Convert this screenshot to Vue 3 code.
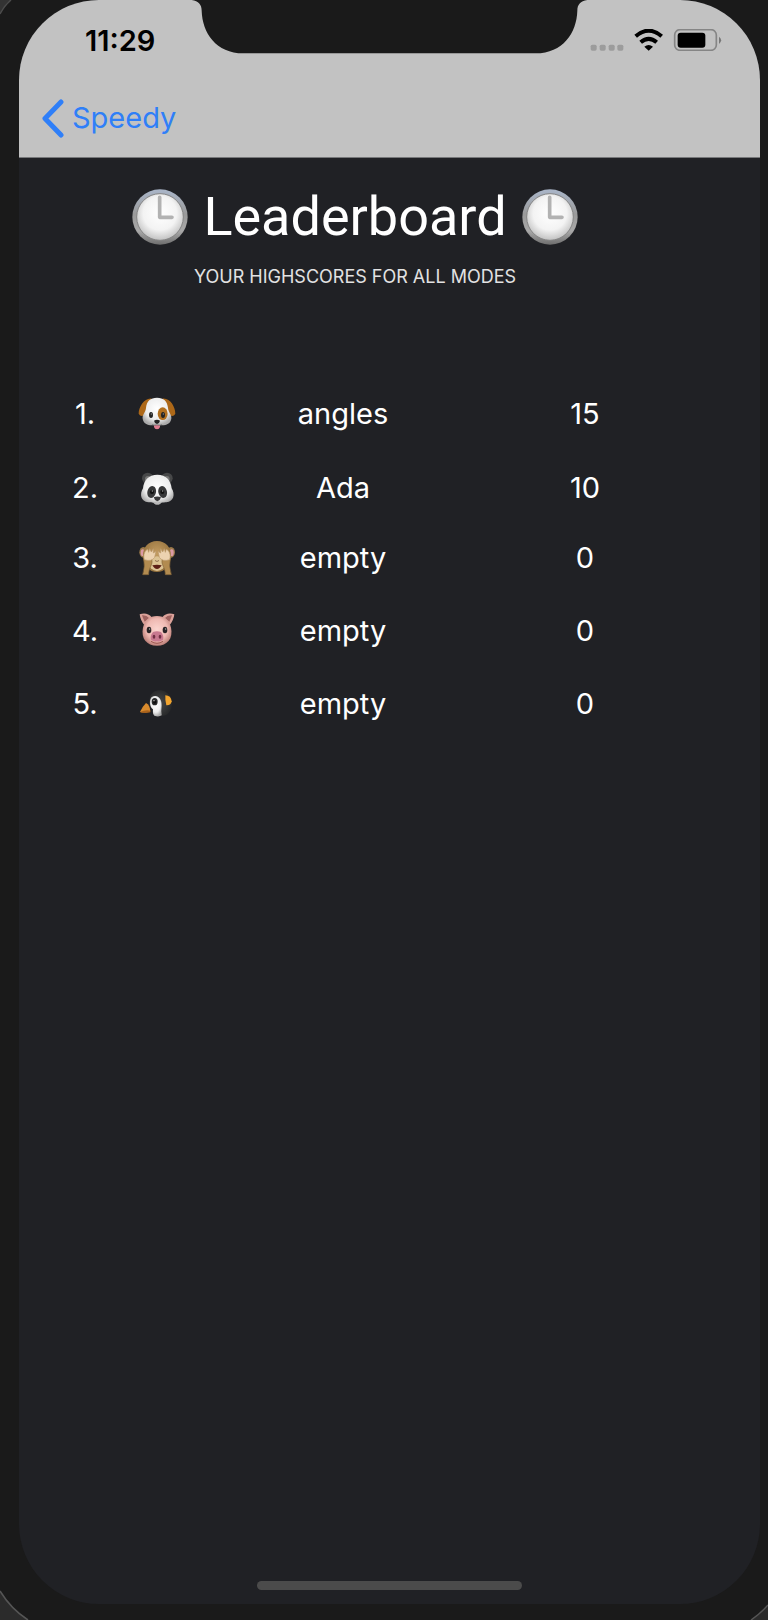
<script setup>
const entries = [
  { rank: 1, animal: 'dog', name: 'angles', score: 15 },
  { rank: 2, animal: 'panda', name: 'Ada', score: 10 },
  { rank: 3, animal: 'monkey', name: 'empty', score: 0 },
  { rank: 4, animal: 'pig', name: 'empty', score: 0 },
  { rank: 5, animal: 'penguin', name: 'empty', score: 0 },
]
</script>

<template>
  <div class="device">
    <svg class="corner corner-tl" viewBox="0 0 40 40" aria-hidden="true">
      <path d="M0 0H11Q4 6 0 14Z" fill="#333" />
      <path d="M11 0Q4 6 0 14" fill="none" stroke="#4c4c4c" stroke-width="1.5" />
    </svg>
    <svg class="corner corner-bl" viewBox="0 0 40 40" aria-hidden="true">
      <path d="M0 11Q11 29 28 40H0Z" fill="#2b2b2b" />
      <path d="M0 11Q11 29 28 40" fill="none" stroke="#555" stroke-width="1.5" />
    </svg>
    <svg class="corner corner-br" viewBox="0 0 40 40" aria-hidden="true">
      <path d="M40 25Q32 34 23 40H40Z" fill="#2b2b2b" />
      <path d="M40 25Q32 34 23 40" fill="none" stroke="#555" stroke-width="1.5" />
    </svg>

    <div class="screen">
      <header class="top">
        <div class="status">
          <time class="time">11:29</time>
          <svg class="notch" viewBox="0 0 1197 162" aria-hidden="true">
            <path fill="#1a1a1a" d="M5 0C26 3 35 14 35 32C37 98 78 160 160 160H1037C1119 160 1160 98 1162 32C1162 14 1171 3 1192 0Z" />
          </svg>
          <svg class="indicators" viewBox="0 0 396 66" role="img" aria-label="Signal, Wi-Fi, battery">
            <g fill="#9c9c9c">
              <rect x="2" y="47" width="18" height="18" rx="5" />
              <rect x="29" y="47" width="18" height="18" rx="5" />
              <rect x="56" y="47" width="18" height="18" rx="5" />
              <rect x="82" y="47" width="18" height="18" rx="5" />
            </g>
            <g fill="none" stroke="#000" stroke-width="12">
              <path d="M137 22Q176 -12 215 22" />
              <path d="M152 40Q176 19 200 40" />
            </g>
            <path d="M163 53Q176 43 189 53L176 65Z" />
            <rect x="254" y="2" width="125" height="62" rx="16" fill="none" stroke="#858585" stroke-width="5" />
            <rect x="263" y="11" width="83" height="45" rx="9" />
            <path d="M387 23Q400 34 387 45Z" fill="#777" />
          </svg>
        </div>
        <nav class="nav">
          <a class="back" href="#">
            <svg class="chevron" viewBox="0 0 24 40" aria-hidden="true">
              <path d="M20 4L4 20.5L20 37" fill="none" stroke="#2f7ff8" stroke-width="5" stroke-linecap="round" stroke-linejoin="round" />
            </svg>
            <span>Speedy</span>
          </a>
        </nav>
      </header>

      <main class="content">
        <svg class="defs" width="0" height="0" aria-hidden="true">
          <defs>
            <linearGradient id="rim" x1="0" y1="0" x2="0" y2="1">
              <stop offset="0" stop-color="#aab6c9" />
              <stop offset=".45" stop-color="#9a9a9a" />
              <stop offset=".75" stop-color="#a9a9a9" />
              <stop offset="1" stop-color="#6e6e6e" />
            </linearGradient>
            <radialGradient id="dial" cx=".5" cy=".42" r=".6">
              <stop offset="0" stop-color="#fff" />
              <stop offset=".6" stop-color="#f3f3f3" />
              <stop offset="1" stop-color="#bdbdbd" />
            </radialGradient>
            <radialGradient id="white" cx=".5" cy=".4" r=".6">
              <stop offset="0" stop-color="#fff" />
              <stop offset=".65" stop-color="#eee" />
              <stop offset="1" stop-color="#aaa" />
            </radialGradient>
            <radialGradient id="pink" cx=".5" cy=".45" r=".55">
              <stop offset="0" stop-color="#fbd5cf" />
              <stop offset=".65" stop-color="#efb9b2" />
              <stop offset="1" stop-color="#bd817a" />
            </radialGradient>
            <radialGradient id="fur" cx=".5" cy=".4" r=".6">
              <stop offset="0" stop-color="#c39c61" />
              <stop offset="1" stop-color="#93703c" />
            </radialGradient>
            <radialGradient id="coal" cx=".45" cy=".5" r=".6">
              <stop offset="0" stop-color="#494a4a" />
              <stop offset="1" stop-color="#242526" />
            </radialGradient>
          </defs>
        </svg>

        <div class="heading">
          <h1 class="title">
            <svg v-for="side in 2" :key="side" class="clock" :class="{ last: side === 2 }" viewBox="0 0 168 168" aria-hidden="true">
              <circle cx="84" cy="84" r="83" fill="url(#rim)" />
              <circle cx="84" cy="84" r="70" fill="url(#dial)" stroke="#858585" stroke-width="3" />
              <path d="M83 25V85H120" fill="none" stroke="#b2b2b2" stroke-width="11" stroke-linecap="round" stroke-linejoin="round" />
            </svg>
            <span class="title-text">Leaderboard</span>
          </h1>
          <p class="subtitle">YOUR HIGHSCORES FOR ALL MODES</p>
        </div>

        <table class="scores" aria-label="Highscores">
          <colgroup>
            <col class="col-rank" />
            <col class="col-animal" />
            <col class="col-name" />
            <col class="col-score" />
          </colgroup>
          <tbody>
            <tr v-for="entry in entries" :key="entry.rank">
              <td>{{ entry.rank }}.</td>
              <td>
                <svg class="animal" viewBox="0 0 120 120" role="img" :aria-label="entry.animal">
                  <g v-if="entry.animal === 'dog'">
                    <path d="M44 14C24 10 5 38 5 59Q10 69 22 64L42 30ZM76 14C98 10 115 38 115 59Q110 69 98 64L78 30Z" fill="#ad6818" />
                    <path d="M60 11C80 11 91 21 93 42C94 55 105 62 103 74C101 89 86 95 73 94H47C34 95 19 89 17 74C15 62 26 55 27 42C29 21 40 11 60 11Z" fill="url(#white)" />
                    <ellipse cx="77" cy="59" rx="15" ry="19" fill="#b2701f" />
                    <ellipse cx="42" cy="63" rx="6" ry="9" fill="#242424" />
                    <ellipse cx="78" cy="63" rx="6" ry="9" fill="#242424" />
                    <circle cx="43" cy="60" r="2" fill="#888" />
                    <circle cx="79" cy="60" r="2" fill="#888" />
                    <path d="M51 94H69V99Q67 106 60 106Q53 106 51 99Z" fill="#df7d91" />
                    <path d="M45 91Q56 97 60 89Q64 97 75 91" fill="none" stroke="#777" stroke-width="2" />
                    <path d="M51 80Q60 74 69 80Q67 89 60 90Q53 89 51 80Z" fill="#222" />
                  </g>
                  <g v-else-if="entry.animal === 'panda'">
                    <circle cx="32" cy="31" r="17" fill="#474849" />
                    <circle cx="90" cy="31" r="17" fill="#474849" />
                    <circle cx="33" cy="33" r="9" fill="#777" />
                    <circle cx="89" cy="33" r="9" fill="#777" />
                    <path d="M61 20C87 20 102 37 104 61C115 79 111 101 88 103C77 104 74 103 70 107Q61 114 52 107C48 103 45 104 34 103C11 101 7 79 18 61C20 37 35 20 61 20Z" fill="url(#white)" />
                    <ellipse cx="44" cy="72" rx="13" ry="18" fill="#373839" transform="rotate(15 44 72)" />
                    <ellipse cx="77" cy="72" rx="13" ry="18" fill="#373839" transform="rotate(-15 77 72)" />
                    <circle cx="45" cy="72" r="6" fill="#111" />
                    <circle cx="76" cy="72" r="6" fill="#111" />
                    <circle cx="46" cy="69" r="2" fill="#aaa" />
                    <circle cx="77" cy="69" r="2" fill="#aaa" />
                    <path d="M50 88Q61 83 72 88Q70 97 61 100Q52 97 50 88Z" fill="#39393a" />
                    <path d="M51 105Q61 97 71 105" fill="none" stroke="#aaa" stroke-width="2" />
                  </g>
                  <g v-else-if="entry.animal === 'monkey'">
                    <ellipse cx="19" cy="43" rx="12" ry="16" fill="#9b7a4a" />
                    <ellipse cx="102" cy="43" rx="12" ry="16" fill="#9b7a4a" />
                    <ellipse cx="17" cy="44" rx="6" ry="10" fill="#dc9aa6" />
                    <ellipse cx="104" cy="44" rx="6" ry="10" fill="#dc9aa6" />
                    <path d="M60 9C86 9 103 28 102 55C101 85 83 102 60 102C37 102 19 85 18 55C17 28 34 9 60 9Z" fill="url(#fur)" />
                    <ellipse cx="60" cy="77" rx="24" ry="22" fill="#dcc394" />
                    <path d="M56 67L58 71M64 67L62 71" stroke="#6c4931" stroke-width="3" />
                    <path d="M46 82Q60 79 74 82Q68 93 60 93Q52 93 46 82Z" fill="#5d2018" />
                    <path d="M20 61L44 64C49 80 35 87 35 110H17Q25 86 20 61ZM100 61L76 64C71 80 85 87 85 110H103Q95 86 100 61Z" fill="#b28b50" stroke="#7d6036" stroke-width="2" />
                    <path d="M22 65C17 49 25 37 32 34L35 43L38 32L43 42L49 32L49 45L57 40L53 58Q44 72 22 65ZM98 65C103 49 95 37 88 34L85 43L82 32L77 42L71 32L71 45L63 40L67 58Q76 72 98 65Z" fill="#ecd2b0" stroke="#bb9a6d" stroke-width="2" stroke-linejoin="round" />
                  </g>
                  <g v-else-if="entry.animal === 'pig'">
                    <path d="M8 10Q31 3 44 19L22 42Q10 28 8 10ZM112 10Q89 3 76 19L98 42Q110 28 112 10Z" fill="#dba29a" />
                    <path d="M15 13Q29 12 36 21L23 32Q18 23 15 13ZM105 13Q91 12 84 21L97 32Q102 23 105 13Z" fill="#9f625f" />
                    <path d="M60 15C83 15 97 28 102 50C109 82 91 104 60 104C29 104 11 82 18 50C23 28 37 15 60 15Z" fill="url(#pink)" />
                    <ellipse cx="36" cy="57" rx="7" ry="10" fill="#292426" />
                    <ellipse cx="84" cy="57" rx="7" ry="10" fill="#292426" />
                    <circle cx="38" cy="54" r="2" fill="#bbb" />
                    <circle cx="86" cy="54" r="2" fill="#bbb" />
                    <path d="M42 91Q60 103 78 91" fill="none" stroke="#9c5752" stroke-width="3" />
                    <path d="M48 63Q60 59 72 63Q82 75 78 86Q69 93 60 91Q51 93 42 86Q38 75 48 63Z" fill="#c87990" />
                    <ellipse cx="51" cy="77" rx="4" ry="6" fill="#713044" />
                    <ellipse cx="69" cy="77" rx="4" ry="6" fill="#713044" />
                  </g>
                  <g v-else>
                    <path d="M39 37C50 12 85 13 100 37C111 61 101 90 85 94Q70 98 57 94L37 61Z" fill="url(#coal)" />
                    <path d="M44 39C62 30 75 45 74 65Q72 80 74 94Q65 100 52 95Q46 90 48 76C37 68 36 48 44 39Z" fill="url(#white)" />
                    <ellipse cx="53" cy="53" rx="9" ry="11" fill="#272829" />
                    <circle cx="53" cy="54" r="5" fill="#0c0c0c" />
                    <circle cx="51" cy="50" r="2" fill="#ddd" />
                    <path d="M85 34Q102 34 104 52Q102 65 88 64Q84 50 85 34Z" fill="#f3a52e" />
                    <path d="M27 57Q39 63 40 82Q23 88 9 84Q15 69 27 57Z" fill="#d98b2d" />
                    <path d="M9 84Q25 77 40 80V85Q24 89 9 84Z" fill="#a9621c" />
                  </g>
                </svg>
              </td>
              <td>{{ entry.name }}</td>
              <td>{{ entry.score }}</td>
            </tr>
          </tbody>
        </table>
      </main>

      <div class="home-indicator"></div>
    </div>
  </div>
</template>

<style>
body {
  margin: 0;
  background: #1a1a1a;
}
</style>

<style scoped>
.device {
  position: relative;
  box-sizing: border-box;
  display: flex;
  min-height: 100vh;
  padding: 0 8px 16px 19px;
  background: #1a1a1a;
  color: #fff;
  font-family: Inter, "Liberation Sans", sans-serif;
}
.corner {
  position: absolute;
  width: 40px;
  height: 40px;
}
.corner-tl {
  top: 0;
  left: 0;
}
.corner-bl {
  bottom: 0;
  left: 0;
}
.corner-br {
  right: 0;
  bottom: 0;
}
.screen {
  flex: 1;
  display: flex;
  flex-direction: column;
  overflow: hidden;
  border-radius: 80px;
  background: #202125;
}
.top {
  background: #c2c2c2;
  border-bottom: 1px solid #77787a;
}
.status {
  display: grid;
  grid-template-columns: 1fr auto 1fr;
  align-items: end;
}
.time {
  padding-left: 66px;
  color: #000;
  font-size: 29px;
  font-weight: 600;
  line-height: 26px;
}
.notch {
  display: block;
  width: 399px;
  height: 54px;
}
.indicators {
  justify-self: end;
  width: 132px;
  height: 22px;
  margin: 0 38px 3px 0;
}
.nav {
  display: flex;
  padding: 44px 22px 19px;
}
.back {
  display: flex;
  align-items: center;
  gap: 7px;
  color: #2f7ff8;
  font-size: 29px;
  line-height: 40px;
  text-decoration: none;
}
.chevron {
  width: 24px;
  height: 40px;
}
.content {
  flex: 1;
  padding: 27px 83px 40px 30px;
}
.defs {
  position: absolute;
}
.heading {
  display: flex;
  flex-direction: column;
  align-items: center;
  gap: 16px;
  margin: 0 16px 105px 0;
}
.title {
  display: flex;
  align-items: center;
  gap: 15px;
  margin: 0;
  font-family: Roboto, Inter, sans-serif;
  font-size: 54px;
  font-weight: 400;
  line-height: 64px;
}
.clock {
  width: 56px;
  height: 56px;
}
.clock.last {
  order: 2;
}
.title-text {
  order: 1;
}
.subtitle {
  margin: 0;
  color: #e2e2e2;
  font-size: 18px;
  line-height: 24px;
}
.scores {
  width: 100%;
  table-layout: fixed;
  border-collapse: collapse;
  font-size: 29px;
  line-height: 40px;
  text-align: center;
}
.scores tr {
  height: 73px;
}
.scores tr:nth-child(1) {
  height: 74px;
}
.scores tr:nth-child(2) {
  height: 70px;
}
.scores td {
  padding: 0;
  vertical-align: top;
}
.col-rank,
.col-animal {
  width: 72px;
}
.col-score {
  width: 184px;
}
.animal {
  display: block;
  width: 40px;
  height: 40px;
  margin: 0 auto;
}
.home-indicator {
  align-self: center;
  width: 265px;
  height: 9px;
  margin-bottom: 14px;
  border-radius: 5px;
  background: #4b4b4b;
}
</style>
